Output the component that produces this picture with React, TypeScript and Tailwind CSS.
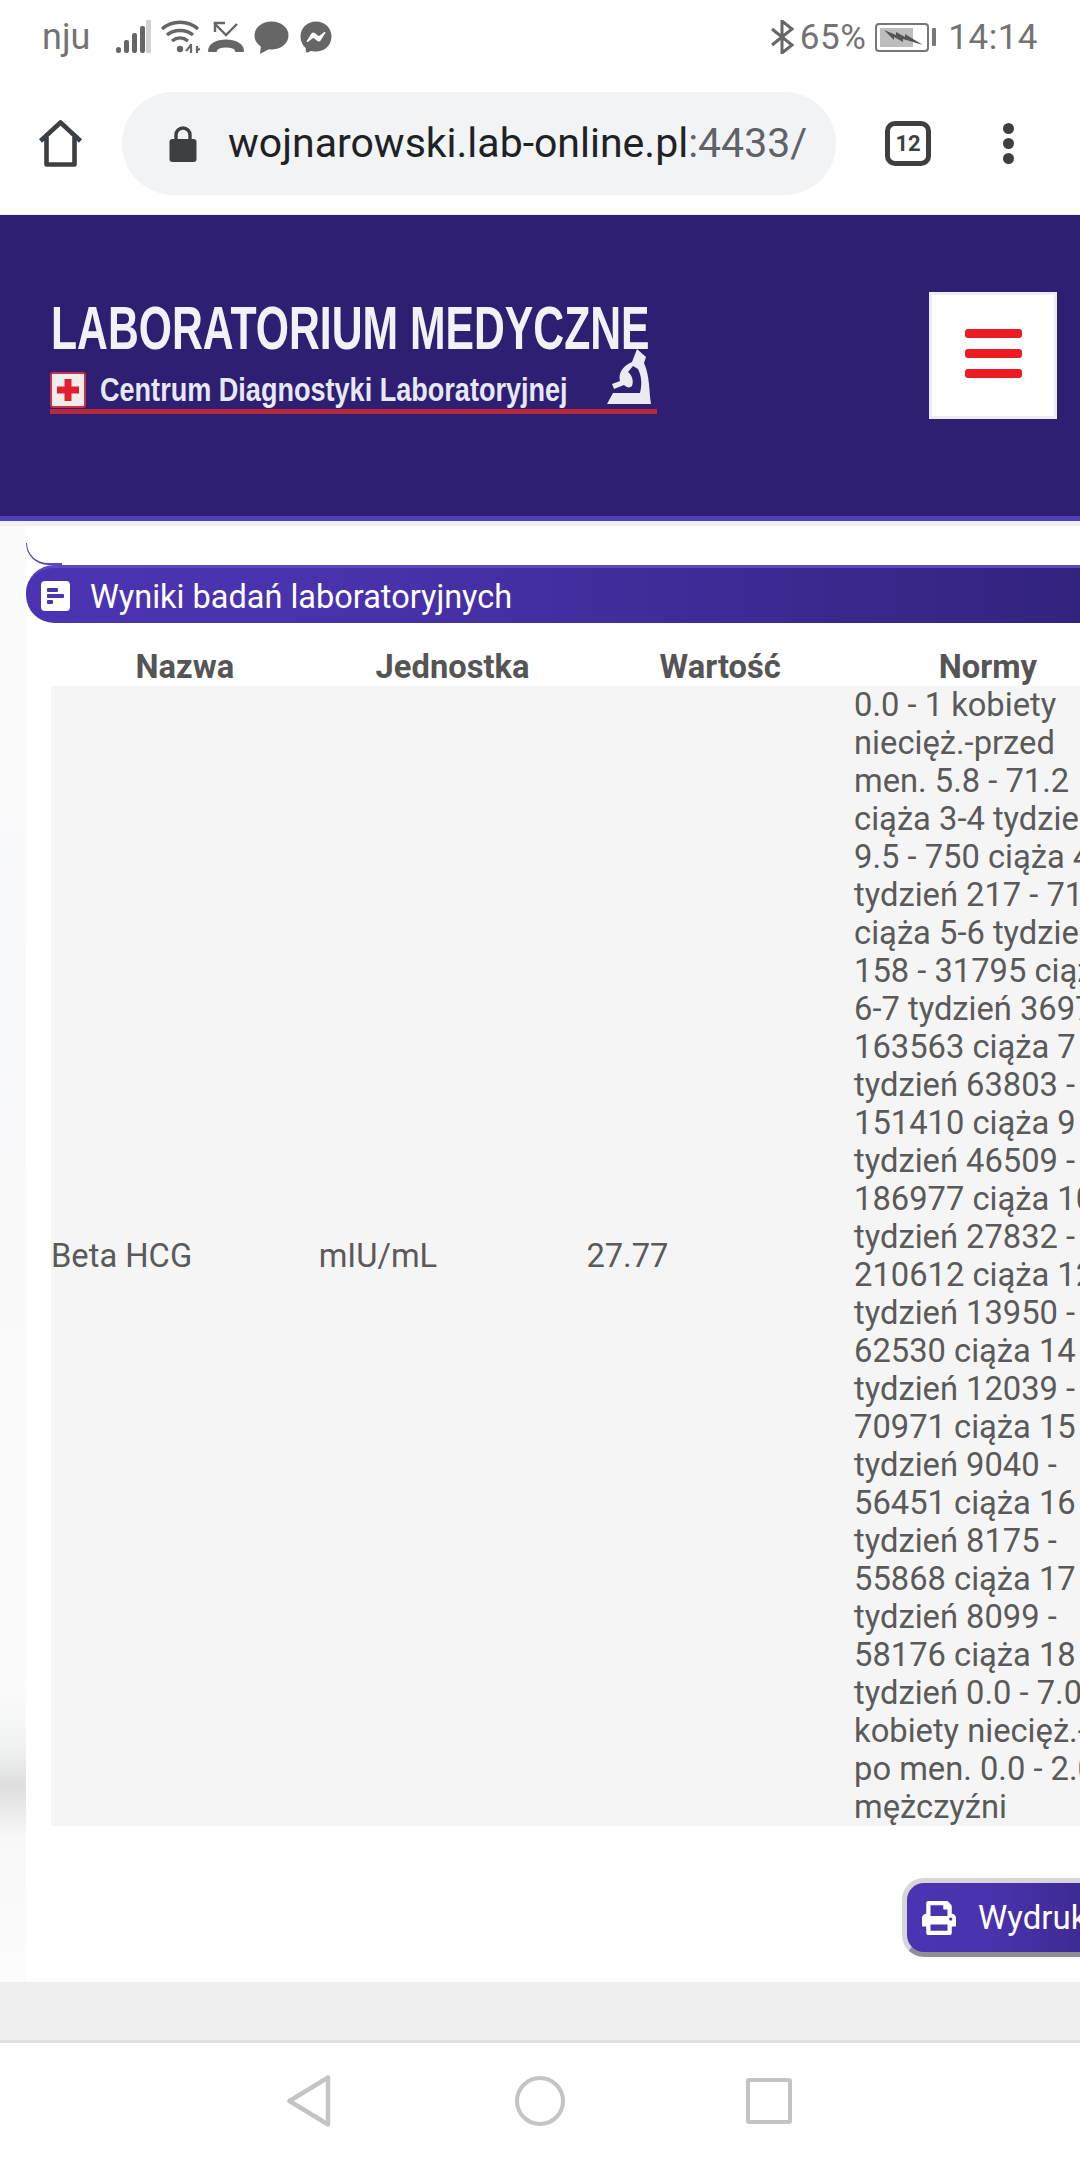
import React from "react";
import { FaFacebookMessenger, FaPrint } from "react-icons/fa";

const norms = [
  "0.0 - 1 kobiety","niecięż.-przed","men. 5.8 - 71.2","ciąża 3-4 tydzień","9.5 - 750 ciąża 4-5","tydzień 217 - 7138","ciąża 5-6 tydzień","158 - 31795 ciąża","6-7 tydzień 3697 -","163563 ciąża 7 - 8","tydzień 63803 -","151410 ciąża 9 - 10","tydzień 46509 -","186977 ciąża 10-11","tydzień 27832 -","210612 ciąża 12-13","tydzień 13950 -","62530 ciąża 14 - 15","tydzień 12039 -","70971 ciąża 15 - 16","tydzień 9040 -","56451 ciąża 16 - 17","tydzień 8175 -","55868 ciąża 17 - 18","tydzień 8099 -","58176 ciąża 18","tydzień 0.0 - 7.0","kobiety niecięż.-","po men. 0.0 - 2.0","mężczyźni",
];

function StatusBar() {
  return (
    <div className="h-[92px] flex items-center pl-[42px] pr-[42px] pb-[18px] text-[#737373] text-[35px] leading-none">
      <span className="text-[36px] mr-[25px]">nju</span>
      <svg width="36" height="34" viewBox="0 0 36 34" className="mr-[9px]">
        <rect x="1" y="27" width="5" height="6" rx="2.5" fill="#666" />
        <rect x="9" y="20" width="5" height="13" rx="2" fill="#666" />
        <rect x="17" y="13" width="5" height="20" rx="2" fill="#666" />
        <rect x="25" y="6" width="5" height="27" rx="2" fill="#666" />
        <rect x="31" y="0" width="5" height="33" rx="1" fill="#d2d2d2" />
      </svg>
      <svg width="41" height="34" viewBox="0 0 41 34" className="mr-[7px]" fill="none" stroke="#666" strokeWidth="3.4">
        <path d="M2 9C12 0 28 0 38 9" />
        <path d="M7 15C14 9 26 9 33 15" />
        <path d="M12 21C17 17 23 17 28 21" />
        <circle cx="20" cy="29" r="3.2" fill="#666" stroke="none" />
        <path d="M31 24v9M37 26v7" strokeWidth="2.2" />
        <path d="M26 31l5-6M37 30l3-1" strokeWidth="2" />
      </svg>
      <svg width="36" height="32" viewBox="0 0 36 32" className="mr-[10px]" fill="none" stroke="#666">
        <path d="M7 11V2h10M6 2l12 12L29 3" strokeWidth="2.4" />
        <path d="M1 30c0-14 34-14 34 0h-7c0-6-20-6-20 0z" fill="#666" stroke="#666" strokeWidth="2" strokeLinejoin="round" />
      </svg>
      <svg width="35" height="33" viewBox="0 0 35 33" className="mr-[11px]">
        <ellipse cx="17.5" cy="14.5" rx="17" ry="14" fill="#666" />
        <path d="M7 24L6 33l11-6z" fill="#666" />
      </svg>
      <FaFacebookMessenger size={32} color="#666" />
      <div className="flex-1" />
      <svg width="24" height="34" viewBox="0 0 24 34" className="mr-[5px]" fill="none" stroke="#666" strokeWidth="3">
        <path d="M1 9l20 16-10 8V1l10 8L1 25" />
      </svg>
      <span className="text-[35px] tracking-[0.5px]">65%</span>
      <div className="relative ml-[9px] w-[54px] h-[29px] border-2 border-[#777] rounded-[4px] p-[3px] flex">
        <div className="w-[33px] h-full bg-[#bdbdbd]" />
        <svg width="40" height="16" viewBox="0 0 40 16" className="absolute left-[7px] top-[4px]">
          <path d="M0 1l12 5 0-3 9 5 0-3 18 11-20-6 0 3-9-5 0 3z" fill="#555" />
        </svg>
      </div>
      <div className="ml-[3px] w-[4px] h-[18px] bg-[#777] rounded-[1px]" />
      <span className="ml-[12px] text-[35px] tracking-[0.5px]">14:14</span>
    </div>
  );
}

function Toolbar() {
  return (
    <div className="h-[123px] flex items-start pt-0 border-b border-[#f4f4f6]">
      <div className="w-[122px] h-[103px] flex items-center pl-[38px]">
        <svg width="45" height="47" viewBox="0 0 45 47" fill="none" stroke="#3c4043" strokeWidth="4.6" strokeLinejoin="round">
          <path d="M2.5 21L22.5 2.5 42.5 21M8.5 17v27.5h28V17" />
        </svg>
      </div>
      <div className="w-[714px] h-[103px] rounded-full bg-[#f1f3f4] flex items-center pl-[47px]">
        <svg width="28" height="36" viewBox="0 0 28 36" className="mr-[31px]">
          <path d="M7 15V9a7 7 0 0 1 14 0v6" fill="none" stroke="#3c4043" strokeWidth="3.4" />
          <rect x="0.5" y="13" width="27" height="23" rx="3" fill="#3c4043" />
        </svg>
        <span className="text-[41px] leading-none whitespace-nowrap text-[#202124]">
          wojnarowski.lab-online.pl<span className="text-[#5f6368]">:4433/</span>
        </span>
      </div>
      <div className="h-[103px] flex items-center pl-[49px]">
        <div className="w-[46px] h-[45px] border-[5px] border-[#3c4043] rounded-[10px] flex items-center justify-center text-[22px] font-bold text-[#3c4043] leading-none">12</div>
      </div>
      <div className="h-[103px] flex flex-col items-center justify-center gap-[4px] ml-[72px]">
        <div className="w-[11px] h-[11px] rounded-full bg-[#3c4043]" />
        <div className="w-[11px] h-[11px] rounded-full bg-[#3c4043]" />
        <div className="w-[11px] h-[11px] rounded-full bg-[#3c4043]" />
      </div>
    </div>
  );
}

function Logo() {
  return (
    <div className="w-[610px] flex flex-col text-white font-['Liberation_Sans',sans-serif] font-bold">
      <div className="h-[58px] flex items-center whitespace-nowrap pl-[1px]">
        <span className="text-[61px] leading-none origin-left scale-x-[0.70] text-[#f2f2f6]">LABORATORIUM MEDYCZNE</span>
      </div>
      <div className="h-[46px] mt-[5px] flex items-end whitespace-nowrap">
        <div className="w-[36px] h-[36px] bg-[#f3ecec] border-2 border-[#c9324a] rounded-[3px] flex items-center justify-center mb-[1px]">
          <svg width="24" height="24" viewBox="0 0 24 24"><path d="M8.5 1h7v7.500h7.500v7h-7.500v7.500h-7v-7.500H1v-7h7.500z" fill="#e02030" /></svg>
        </div>
        <span className="ml-[14px] mb-[3px] text-[33px] leading-none origin-left scale-x-[0.82] text-[#e8e8f4] w-[503px]">Centrum Diagnostyki Laboratoryjnej</span>
        <svg width="50" height="60" viewBox="0 0 50 60" className="shrink-0">
          <path d="M34 0l-5 13c-10 4-14 12-12 19l-8 3 2 5 10-4c3 3 6 3 8 1 2-5 0-11-4-14l5-6 5 3c4 8 4 16 2 24H10l-6 11h44c-2-12-1-28-7-41l2-6z" fill="#eaeaf0" />
        </svg>
      </div>
      <div className="h-[5px] w-[607px] bg-[#b72a3e]" />
    </div>
  );
}

function Header() {
  return (
    <div className="h-[306px] bg-[#2e1f73] border-b-[5px] border-[#5040b8] flex items-center justify-between pl-[50px] pr-[23px]">
      <div className="pb-[18px]"><Logo /></div>
      <div className="w-[128px] h-[127px] bg-white border-[3px] border-[#efeaf6] flex flex-col items-center justify-center gap-[11px] pb-[4px] mb-[20px]">
        <div className="w-[57px] h-[9px] rounded-[3px] bg-[#ed1c24]" />
        <div className="w-[57px] h-[9px] rounded-[3px] bg-[#ed1c24]" />
        <div className="w-[57px] h-[9px] rounded-[3px] bg-[#ed1c24]" />
      </div>
    </div>
  );
}

function ResultsTable() {
  return (
    <div className="ml-[25px] text-[#5a5a5a] text-[32.7px] leading-[38px] w-[1072px]">
      <div className="grid grid-cols-[267.7px_267.7px_267.7px_267.7px] font-bold h-[63px] items-end text-center text-[#555]">
        <div>Nazwa</div>
        <div>Jednostka</div>
        <div>Wartość</div>
        <div>Normy</div>
      </div>
      <div className="grid grid-cols-[267.7px_267.7px_267.7px_267.7px] bg-[#f5f5f5] items-center">
        <div>Beta HCG</div>
        <div>mIU/mL</div>
        <div>27.77</div>
        <div className="whitespace-nowrap">
          {norms.map((l) => (
            <div key={l}>{l}</div>
          ))}
        </div>
      </div>
    </div>
  );
}

function Panel() {
  return (
    <div className="ml-[26px] flex-1 bg-white flex flex-col overflow-hidden">
      <div className="pt-[17px] h-[39px] shrink-0">
        <div className="h-[22px] w-[36px] rounded-bl-[26px] border-l border-b-2 border-[#5a46b8]" />
      </div>
      <div className="shrink-0 h-[58px] rounded-l-[28px] border-t-[3px] border-[#6146c2] bg-[linear-gradient(90deg,#4c33b2_0%,#4a32ad_30%,#33237e_100%)] flex items-center pl-[15px] text-white text-[32.5px]">
        <svg width="29" height="30" viewBox="0 0 29 30">
          <rect width="29" height="30" rx="4" fill="#fff" />
          <rect x="6" y="7" width="11" height="4" rx="1" fill="#4b33b0" />
          <rect x="6" y="13" width="17" height="4" rx="1" fill="#4b33b0" />
          <rect x="6" y="19" width="6" height="4" rx="1" fill="#4b33b0" />
        </svg>
        <span className="ml-[20px] pt-[3px] leading-none">Wyniki badań laboratoryjnych</span>
      </div>
      <ResultsTable />
      <div className="flex justify-start pl-[876px] pt-[52px]">
        <div className="w-[300px] shrink-0 h-[79px] rounded-[22px] border-[5px] border-[#d6d6d9] border-b-[#8e8e93] bg-[linear-gradient(90deg,#4c33b2_0%,#4a32ad_30%,#2f2070_100%)] flex items-center pl-[15px] text-white text-[33px]">
          <FaPrint size={34} color="#fff" />
          <span className="ml-[22px] leading-none">Wydruk</span>
        </div>
      </div>
    </div>
  );
}

function NavBar() {
  return (
    <div className="h-[120px] bg-white border-t-[3px] border-[#e0e0e0] flex items-center pb-[2px]">
      <div className="w-[287px]" />
      <svg width="44" height="52" viewBox="0 0 44 52" fill="none" stroke="#c4c4c4" strokeWidth="4.500" strokeLinejoin="round">
        <path d="M41 2.500V49.500L2.500 26z" />
      </svg>
      <div className="w-[184px]" />
      <div className="w-[50px] h-[50px] rounded-full border-[4.5px] border-[#c4c4c4]" />
      <div className="w-[181px]" />
      <div className="w-[46px] h-[46px] rounded-[3px] border-[4.5px] border-[#c4c4c4]" />
    </div>
  );
}

export default function App() {
  return (
    <div className="w-[1080px] h-[2160px] overflow-hidden bg-white font-['Roboto',sans-serif] flex flex-col">
      <StatusBar />
      <Toolbar />
      <Header />
      <div className="h-[5px] bg-[#efeff4]" />
      <div className="flex-1 flex min-h-0 bg-[linear-gradient(180deg,#fbfbfb_0%,#f8f9fb_35%,#fbfafa_60%,#fbfbfb_80%,#f0f2f2_84%,#dedede_86.500%,#f8f8f8_90%,#fcfcfc_100%)]">
        <Panel />
      </div>
      <div className="h-[58px] bg-[#efefef]" />
      <NavBar />
    </div>
  );
}
